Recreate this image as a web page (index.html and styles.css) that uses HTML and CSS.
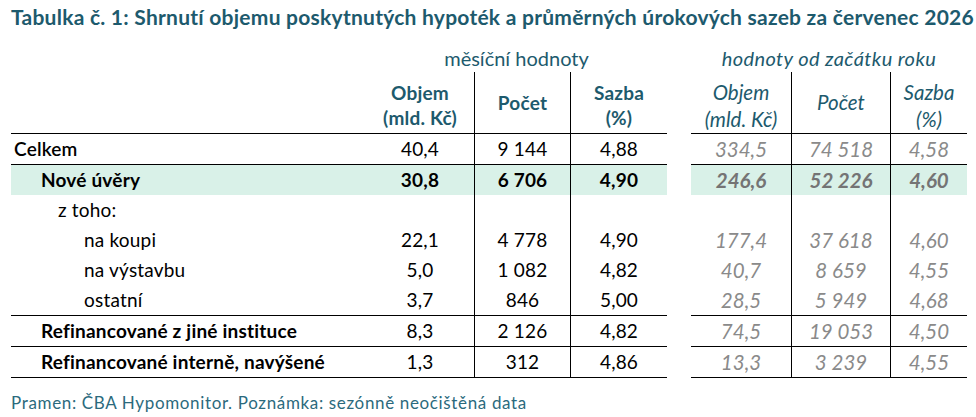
FILE: index.html
```html
<!DOCTYPE html>
<html lang="cs">
<head>
<meta charset="utf-8">
<title>Tabulka č. 1</title>
<link rel="stylesheet" href="styles.css">
</head>
<body>
<div class="page">
  <h1 class="title">Tabulka č. 1: Shrnutí objemu poskytnutých hypoték a průměrných úrokových sazeb za červenec 2026</h1>
  <div class="tbl">
    <div class="grp grp-m">měsíční hodnoty</div>
    <div class="grp grp-y">hodnoty od začátku roku</div>

    <div class="row hdr line">
      <div class="lbl"></div>
      <div class="m two">Objem<br>(mld. Kč)</div>
      <div class="m vl">Počet</div>
      <div class="m vl two">Sazba<br>(%)</div>
      <div class="gap"></div>
      <div class="y two">Objem<br>(mld. Kč)</div>
      <div class="y vl">Počet</div>
      <div class="y vl two">Sazba<br>(%)</div>
    </div>

    <div class="row line h31">
      <div class="lbl l0 semi">Celkem</div>
      <div>40,4</div><div class="vl">9 144</div><div class="vl">4,88</div>
      <div class="gap"></div>
      <div class="ytd">334,5</div><div class="ytd vl">74 518</div><div class="ytd vl">4,58</div>
    </div>
    <div class="row hl">
      <div class="lbl l1 bold">Nové úvěry</div>
      <div class="bold">30,8</div><div class="vl bold">6 706</div><div class="vl bold">4,90</div>
      <div class="gap"></div>
      <div class="ytd bold">246,6</div><div class="ytd vl bold">52 226</div><div class="ytd vl bold">4,60</div>
    </div>
    <div class="row">
      <div class="lbl l2">z toho:</div>
      <div></div><div class="vl"></div><div class="vl"></div>
      <div class="gap"></div>
      <div class="ytd"></div><div class="ytd vl"></div><div class="ytd vl"></div>
    </div>
    <div class="row">
      <div class="lbl l3">na koupi</div>
      <div>22,1</div><div class="vl">4 778</div><div class="vl">4,90</div>
      <div class="gap"></div>
      <div class="ytd">177,4</div><div class="ytd vl">37 618</div><div class="ytd vl">4,60</div>
    </div>
    <div class="row">
      <div class="lbl l3">na výstavbu</div>
      <div>5,0</div><div class="vl">1 082</div><div class="vl">4,82</div>
      <div class="gap"></div>
      <div class="ytd">40,7</div><div class="ytd vl">8 659</div><div class="ytd vl">4,55</div>
    </div>
    <div class="row line h31">
      <div class="lbl l3">ostatní</div>
      <div>3,7</div><div class="vl">846</div><div class="vl">5,00</div>
      <div class="gap"></div>
      <div class="ytd">28,5</div><div class="ytd vl">5 949</div><div class="ytd vl">4,68</div>
    </div>
    <div class="row line h31">
      <div class="lbl l1 bold">Refinancované z jiné instituce</div>
      <div>8,3</div><div class="vl">2 126</div><div class="vl">4,82</div>
      <div class="gap"></div>
      <div class="ytd">74,5</div><div class="ytd vl">19 053</div><div class="ytd vl">4,50</div>
    </div>
    <div class="row line h31">
      <div class="lbl l1 bold">Refinancované interně, navýšené</div>
      <div>1,3</div><div class="vl">312</div><div class="vl">4,86</div>
      <div class="gap"></div>
      <div class="ytd">13,3</div><div class="ytd vl">3 239</div><div class="ytd vl">4,55</div>
    </div>
  </div>
  <p class="note">Pramen: ČBA Hypomonitor. Poznámka: sezónně neočištěná data</p>
</div>
</body>
</html>
```

FILE: styles.css
```css
html, body {
  margin: 0;
  padding: 0;
  background: #ffffff;
}

.page {
  padding: 0 0 0 11px;
  font-family: Lato, "Noto Sans", sans-serif;
  color: #000;
}

.title {
  margin: 0;
  padding-top: 4px;
  height: 45px;
  box-sizing: border-box;
  font-size: 21px;
  letter-spacing: 0.25px;
  font-weight: 700;
  color: #1d5a6d;
  white-space: nowrap;
  line-height: 26px;
}

.tbl {
  display: grid;
  grid-template-columns: 355px 108px 96px 97px 24px 100px 99px 77px;
  width: 956px;
  font-size: 19px;
  letter-spacing: 0.2px;
}

.row {
  display: contents;
}

.row > div {
  box-sizing: border-box;
  height: 30px;
  display: flex;
  align-items: center;
  justify-content: center;
  white-space: nowrap;
  line-height: 22px;
}

.row.h31 > div { height: 31px; }

.grp {
  height: 27px;
  line-height: 24px;
  padding-top: 1px;
  box-sizing: border-box;
  font-size: 20px;
  letter-spacing: 0;
  color: #1d5a6d;
  text-align: center;
  white-space: nowrap;
}
.grp-m { grid-column: 2 / span 3; }
.grp-y { grid-column: 6 / span 3; font-style: italic; letter-spacing: 0.4px; }

.row.hdr > div {
  height: 62px;
  align-items: flex-start;
  text-align: center;
  padding-top: 18px;
  font-weight: 700;
  color: #1d5a6d;
  line-height: 25px;
}
.row.hdr > div.two { padding-top: 8px; }
.row.hdr > div.y {
  font-weight: 400;
  font-style: italic;
  font-size: 20.5px;
  letter-spacing: 0;
  line-height: 26.5px;
  padding-top: 17px;
}
.row.hdr > div.y.two { padding-top: 7px; }

.row > .vl { border-left: 1px solid #000; }

.row.line > div { border-bottom: 1px solid #000; }
.row.line > div.gap { border-bottom: none; }

.row.hl > div { background: #d9f1e8; }
.row.hl > div.gap { background: transparent; }

.row > div.lbl { justify-content: flex-start; }
.l0 { padding-left: 3px; }
.l1 { padding-left: 30px; }
.l2 { padding-left: 47px; }
.l3 { padding-left: 73px; }

.semi { font-weight: 600; }
.bold { font-weight: 700; }

.row > div.ytd {
  color: #8a8a8a;
  font-style: italic;
  font-size: 20.5px;
  letter-spacing: 0;
}
.row > div.ytd.bold { color: #747474; }

.note {
  margin: 14px 0 0;
  font-size: 17px;
  letter-spacing: 0.65px;
  line-height: 22px;
  color: #2b6a7d;
}
```
